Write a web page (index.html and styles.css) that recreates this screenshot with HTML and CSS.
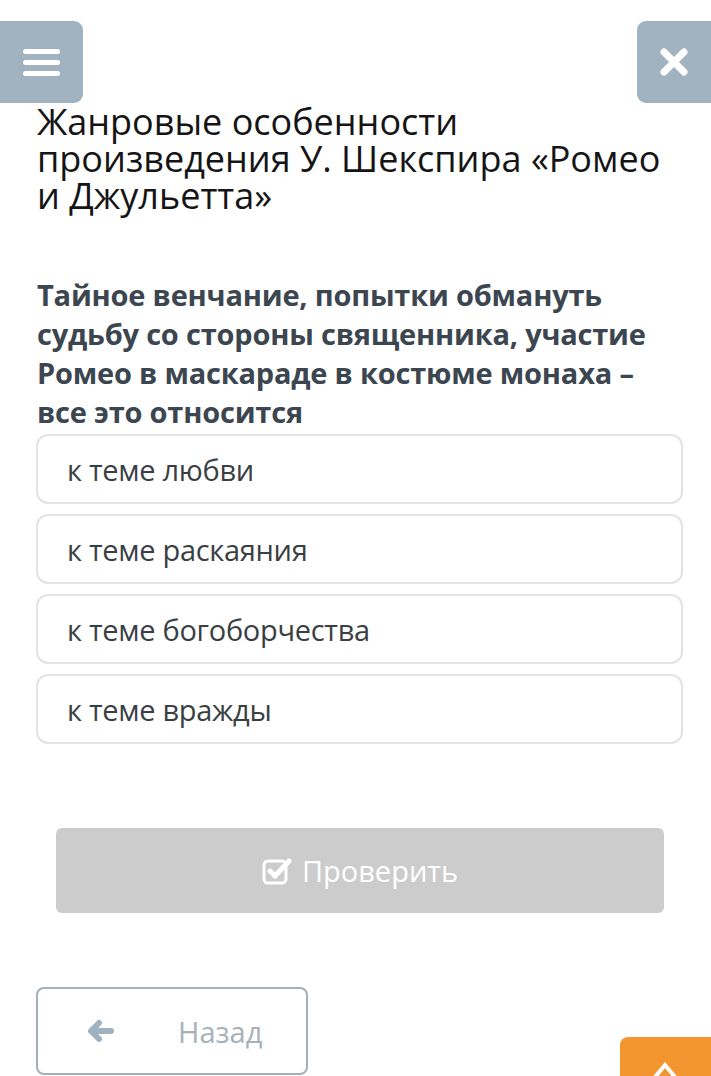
FILE: index.html
```html
<!DOCTYPE html>
<html lang="ru">
<head>
  <meta charset="UTF-8" />
  <meta name="viewport" content="width=device-width, initial-scale=1.0"/>
  <title>Тест</title>
  <link rel="stylesheet" href="styles.css">
</head>
<body>

  <div class="top-bar">
    <button class="icon-btn menu-btn" aria-label="Меню">
      <svg width="38" height="30" viewBox="0 0 38 30">
        <rect x="0" y="2" width="37" height="5" rx="2.5" fill="#fff"/>
        <rect x="0" y="13" width="37" height="5" rx="2.5" fill="#fff"/>
        <rect x="0" y="24" width="37" height="5" rx="2.5" fill="#fff"/>
      </svg>
    </button>
    <button class="icon-btn close-btn" aria-label="Закрыть">
      <svg width="30" height="30" viewBox="0 0 30 30">
        <path d="M5 5 L25 25 M25 5 L5 25" stroke="#fff" stroke-width="7" stroke-linecap="round"/>
      </svg>
    </button>
  </div>

  <div class="content">
    <h1 class="title">Жанровые особенности произведения У. Шекспира «Ромео и Джульетта»</h1>

    <p class="question">Тайное венчание, попытки обмануть судьбу со стороны священника, участие Ромео в маскараде в костюме монаха – все это относится</p>

    <div class="answers">
      <div class="answer">к теме любви</div>
      <div class="answer">к теме раскаяния</div>
      <div class="answer">к теме богоборчества</div>
      <div class="answer">к теме вражды</div>
    </div>

    <div class="check-wrap">
      <button class="check-btn">
        <svg width="30" height="28" viewBox="0 0 30 28">
          <rect x="2" y="4" width="22" height="22" rx="4" fill="none" stroke="#fff" stroke-width="3"/>
          <path d="M8 14 L13 19 L27 4" fill="none" stroke="#fff" stroke-width="5" stroke-linecap="round" stroke-linejoin="round"/>
        </svg>
        Проверить
      </button>
    </div>

    <div class="bottom-bar">
      <button class="back-btn">
        <svg width="28" height="24" viewBox="0 0 28 24">
          <path d="M25 12 H6 M13 4 L5 12 L13 20" fill="none" stroke="#9fb2c0" stroke-width="6" stroke-linecap="round" stroke-linejoin="round"/>
        </svg>
        <span>Назад</span>
      </button>
    </div>
  </div>

  <button class="up-btn" aria-label="Наверх">
    <svg width="30" height="20" viewBox="0 0 30 20">
      <path d="M5 18 L15 6 L25 18" fill="none" stroke="#fff" stroke-width="4"/>
    </svg>
  </button>

</body>
</html>
```

FILE: styles.css
```css
body {
  font-family: "Open Sans", "Noto Sans", sans-serif;
  background: #fff;
  margin: 0;
  overflow: hidden;
  height: 1076px;
  position: relative;
}

button {
  font-family: inherit;
  cursor: pointer;
}

.top-bar {
  display: flex;
  justify-content: space-between;
  padding-top: 21px;
  height: 82px;
}

.icon-btn {
  border: none;
  background-color: #a1b3c1;
  height: 82px;
  display: flex;
  align-items: center;
  justify-content: center;
  padding: 0;
}

.menu-btn {
  width: 83px;
  border-radius: 0 9px 9px 0;
}

.close-btn {
  width: 82px;
  margin-right: -8px;
  border-radius: 9px 0 0 9px;
  padding-right: 8px;
}

.content {
  padding: 0 28px 0 36px;
}

.title {
  font-weight: 400;
  font-size: 36px;
  line-height: 37px;
  color: #151515;
  margin: 0 0 0 1px;
}

.question {
  font-weight: 700;
  font-size: 29px;
  line-height: 39px;
  letter-spacing: -0.2px;
  color: #3c4650;
  margin: 61px 0 0 1px;
}

.answers {
  display: flex;
  flex-direction: column;
  gap: 10px;
  margin-top: 3px;
}

.answer {
  height: 66px;
  border: 2px solid #e1e4e6;
  border-radius: 12px;
  display: flex;
  align-items: center;
  padding-left: 29px;
  font-size: 29px;
  color: #3a3f44;
  letter-spacing: -0.3px;
}

.check-wrap {
  padding: 84px 19px 0 20px;
}

.check-btn {
  width: 100%;
  height: 85px;
  border: none;
  border-radius: 6px;
  background-color: #cccccc;
  color: #fff;
  font-size: 29px;
  display: flex;
  align-items: center;
  justify-content: center;
  gap: 10px;
}

.bottom-bar {
  padding-top: 74px;
}

.back-btn {
  width: 272px;
  height: 88px;
  border: 2px solid #a4b0b8;
  border-radius: 8px;
  background: #fff;
  display: flex;
  align-items: center;
  padding: 0 0 0 48px;
  gap: 64px;
  font-size: 29px;
  color: #a5b2ba;
}

.up-btn {
  position: absolute;
  left: 620px;
  top: 1037px;
  width: 100px;
  height: 60px;
  border: none;
  border-radius: 8px 0 0 0;
  background-color: #f39630;
  display: flex;
  justify-content: center;
  padding: 22px 10px 0 0;
}
```
